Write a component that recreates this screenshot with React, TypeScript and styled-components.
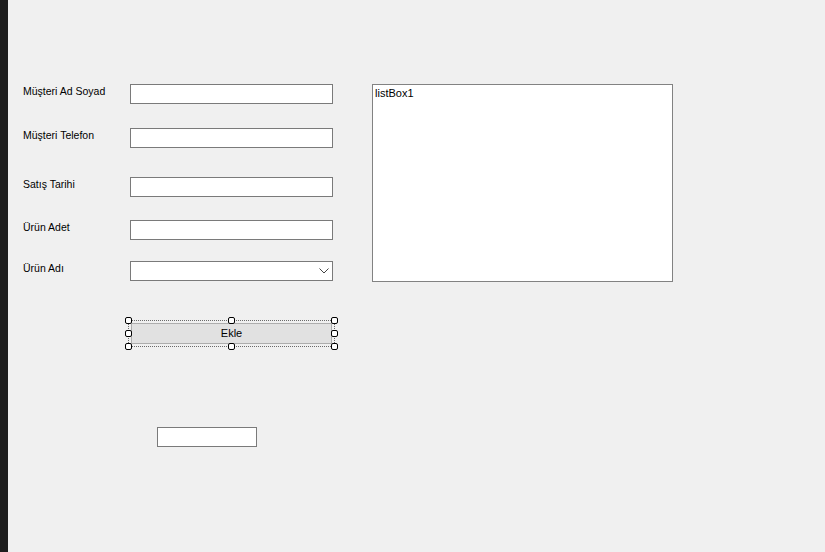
import React from "react";
import styled, { createGlobalStyle } from "styled-components";

const Global = createGlobalStyle`
  html, body {
    margin: 0;
    padding: 0;
    background: #f0f0f0;
  }
  * { box-sizing: border-box; }
`;

const Shell = styled.div`
  display: flex;
  width: 825px;
  height: 552px;
  overflow: hidden;
  font-family: "Liberation Sans", Arial, sans-serif;
  font-size: 11px;
  color: #000;
`;

const Gutter = styled.div`
  width: 8px;
  flex: none;
  background: #1e1e1e;
`;

const Canvas = styled.div`
  flex: 1;
  background: #f0f0f0;
  display: flex;
  align-items: flex-start;
  padding: 84px 0 0 15px;
`;

const FormColumn = styled.div`
  width: 310px;
  display: flex;
  flex-direction: column;
`;

const Field = styled.div<{ $gap: number }>`
  display: grid;
  grid-template-columns: 107px 203px;
  align-items: start;
  margin-top: ${(p) => p.$gap}px;
`;

const Label = styled.span`
  font-size: 10.5px;
  line-height: 14px;
  white-space: nowrap;
`;

const TextBox = styled.div<{ $width?: number }>`
  width: ${(p) => p.$width ?? 203}px;
  height: 20px;
  background: #fff;
  border: 1px solid #7a7a7a;
`;

const ComboBox = styled.div`
  width: 203px;
  height: 20px;
  background: #fff;
  border: 1px solid #7a7a7a;
  display: flex;
  align-items: center;
  justify-content: flex-end;
  padding-right: 3px;
`;

const Selection = styled.div`
  position: relative;
  width: 207px;
  height: 27px;
  margin: 39px 0 0 105px;
  border: 1px dotted #6a6a6a;
  padding: 2px;
`;

const Handle = styled.span<{ $x: "l" | "c" | "r"; $y: "t" | "m" | "b" }>`
  position: absolute;
  width: 7px;
  height: 7px;
  background: #fff;
  border: 1px solid #000;
  border-radius: 2px;
  ${(p) =>
    p.$x === "l" ? "left: -4px;" : p.$x === "r" ? "right: -4px;" : "left: 99px;"}
  ${(p) =>
    p.$y === "t" ? "top: -4px;" : p.$y === "b" ? "bottom: -4px;" : "top: 9px;"}
`;

const Button = styled.div`
  height: 21px;
  background: #e1e1e1;
  border: 1px solid #adadad;
  display: flex;
  align-items: center;
  justify-content: center;
  line-height: 13px;
`;

const Footer = styled.div`
  margin: 80px 0 0 134px;
`;

const ListBox = styled.div`
  width: 301px;
  height: 198px;
  margin-left: 39px;
  background: #fff;
  border: 1px solid #828282;
  padding: 2px 2px;
  line-height: 13px;
`;

const Chevron = () => (
  <svg width="10" height="6" viewBox="0 0 10 6" fill="none">
    <path d="M0.5 0.5 L5 5 L9.5 0.5" stroke="#444" strokeWidth="1" />
  </svg>
);

const fields: { label: string; gap: number; combo?: boolean }[] = [
  { label: "Müşteri Ad Soyad", gap: 0 },
  { label: "Müşteri Telefon", gap: 24 },
  { label: "Satış Tarihi", gap: 29 },
  { label: "Ürün Adet", gap: 23 },
  { label: "Ürün Adı", gap: 21, combo: true },
];

export default function App() {
  return (
    <>
      <Global />
      <Shell>
        <Gutter />
        <Canvas>
          <FormColumn>
            {fields.map((f) => (
              <Field key={f.label} $gap={f.gap}>
                <Label>{f.label}</Label>
                {f.combo ? (
                  <ComboBox>
                    <Chevron />
                  </ComboBox>
                ) : (
                  <TextBox />
                )}
              </Field>
            ))}
            <Selection>
              <Button>Ekle</Button>
              <Handle $x="l" $y="t" />
              <Handle $x="c" $y="t" />
              <Handle $x="r" $y="t" />
              <Handle $x="l" $y="m" />
              <Handle $x="r" $y="m" />
              <Handle $x="l" $y="b" />
              <Handle $x="c" $y="b" />
              <Handle $x="r" $y="b" />
            </Selection>
            <Footer>
              <TextBox $width={100} />
            </Footer>
          </FormColumn>
          <ListBox>listBox1</ListBox>
        </Canvas>
      </Shell>
    </>
  );
}
